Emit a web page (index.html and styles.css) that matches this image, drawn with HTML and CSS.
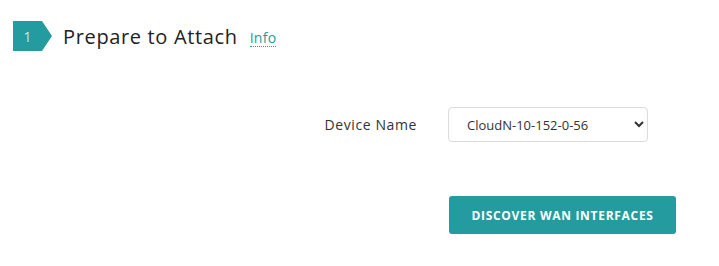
FILE: index.html
```html
<!DOCTYPE html>
<html lang="en">
<head>
    <meta charset="UTF-8">
    <meta name="viewport" content="width=device-width, initial-scale=1.0">
    <title>Prepare to Attach</title>
    <link rel="stylesheet" href="styles.css">
</head>
<body>
    <div class="step">
        <div class="step-header">
            <div class="step-badge"><span>1</span></div>
            <h2 class="step-title">Prepare to Attach</h2>
            <a href="#" class="info-link">Info</a>
        </div>

        <form class="step-form">
            <label for="deviceName" class="form-label">Device Name</label>
            <select id="deviceName" class="form-select">
                <option>CloudN-10-152-0-56</option>
            </select>

            <button type="button" class="discover-btn">Discover WAN Interfaces</button>
        </form>
    </div>
</body>
</html>
```

FILE: styles.css
```css
:root {
    --teal: #249c9f;
    --text-color: #222222;
    --label-color: #333333;
    --border-color: #dcdcdc;
}

body {
    margin: 0;
    padding: 0;
    font-family: 'Open Sans', 'Liberation Sans', sans-serif;
    background: #ffffff;
    color: var(--text-color);
}

.step {
    padding: 21px 13px;
}

.step-header {
    display: flex;
    align-items: center;
    height: 30px;
}

.step-badge {
    width: 39px;
    height: 30px;
    background: var(--teal);
    clip-path: polygon(0 0, 29px 0, 39px 50%, 29px 100%, 0 100%);
    display: flex;
    align-items: center;
}

.step-badge span {
    width: 29px;
    text-align: center;
    color: rgba(255, 255, 255, 0.75);
    font-size: 14px;
}

.step-title {
    margin: 0 0 0 11px;
    font-size: 20px;
    font-weight: 400;
    letter-spacing: 0.65px;
    color: var(--text-color);
}

.info-link {
    margin-left: 12px;
    margin-top: 4px;
    font-size: 14px;
    letter-spacing: 0.3px;
    color: var(--teal);
    text-decoration: none;
    border-bottom: 1px dotted var(--teal);
    line-height: 16px;
}

.step-form {
    display: grid;
    grid-template-columns: 404px 200px;
    column-gap: 31px;
    align-items: center;
    margin-top: 56px;
}

.form-label {
    text-align: right;
    font-size: 14px;
    letter-spacing: 0.6px;
    color: var(--label-color);
}

.form-select {
    height: 35px;
    padding: 0 8px 0 14px;
    font-family: inherit;
    font-size: 13px;
    color: var(--label-color);
    background: #ffffff;
    border: 1px solid var(--border-color);
    border-radius: 4px;
}

.discover-btn {
    grid-column: 2;
    width: 227px;
    height: 38px;
    margin-top: 54px;
    margin-left: 1px;
    padding: 0;
    background: var(--teal);
    color: #ffffff;
    border: none;
    border-radius: 3px;
    font-family: inherit;
    font-size: 12px;
    font-weight: 700;
    letter-spacing: 0.7px;
    text-transform: uppercase;
    cursor: pointer;
}
```
